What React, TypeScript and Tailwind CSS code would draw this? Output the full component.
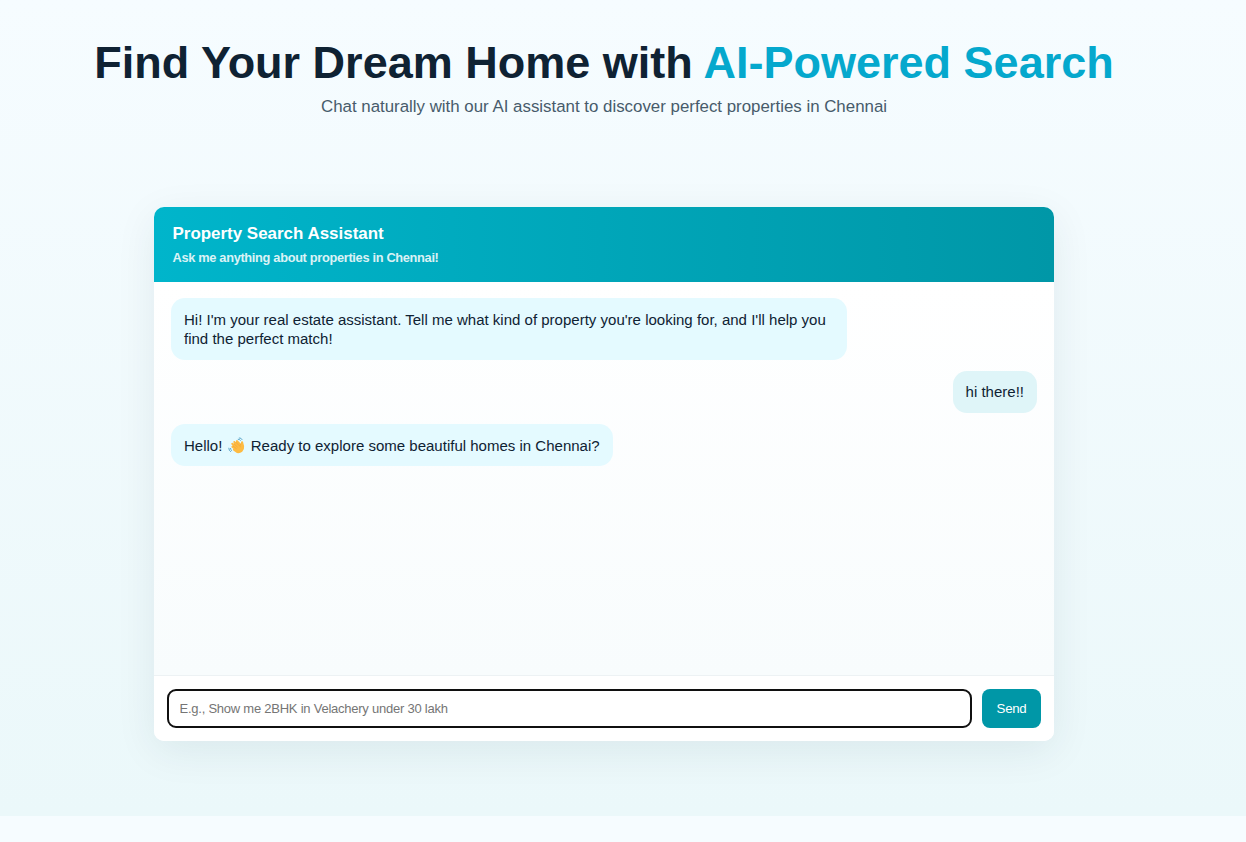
import { useState } from "react";

function WavingHand() {
  return (
    <svg viewBox="0 0 18 18" className="mx-px inline-block h-[18px] w-[18px] align-[-4px]" role="img" aria-label="waving hand">
      <path d="M3.4 6.3Q4.1 5.4 5 6L6.2 7 5.3 5.1Q5.3 3.8 6.7 4.1L8 5.3 8 3.7Q8.8 2.6 9.8 3.5L12.9 6.8 13.1 4.8Q13.7 3.7 14.9 4.6L16.1 9.1Q16.6 12.6 14.2 14.7 11.9 16.6 8.9 16L5.3 13.6Q4.3 12.4 5.4 11.8L3.6 10.4Q2.9 9.2 4.1 8.7L5 9 3.5 7.4Q3 6.8 3.4 6.3Z" fill="#fdbb42" />
      <path d="m6.2 7 3.2 3M8 5.3l3 3.1M5 9l3.2 2.4M12.9 6.8q-1.3 1.4-.8 3.1" fill="none" stroke="#ee9f38" strokeWidth="0.6" strokeLinecap="round" />
      <path d="M10.2 2.2q1.4-.3 2.2 1.2M11.3.9q2-.2 2.8 1.7M2.5 11.4q-.1 1.5 1.2 2.2M.8 11.2q0 2.4 1.8 3.5" fill="none" stroke="#4f9ec4" strokeWidth="0.9" strokeLinecap="round" />
    </svg>
  );
}

export default function App() {
  const [draft, setDraft] = useState("");

  return (
    <div className="h-[842px] overflow-hidden bg-[#f6fcff] font-['Liberation_Sans',Arial,sans-serif] text-[#0f2233]">
      <main className="flex h-[816px] flex-col items-center bg-linear-to-b from-[#f6fcff] to-[#ebf8fa] pr-[38px] pt-[36px]">
        <h1 className="whitespace-nowrap text-[45px] font-bold leading-[54px]">
          Find Your Dream Home with <span className="text-[#05a8cd]">AI-Powered Search</span>
        </h1>
        <p className="mt-[7px] text-[16.86px] leading-[20px] text-[#475b6b]">
          Chat naturally with our AI assistant to discover perfect properties in Chennai
        </p>

        <section className="mt-[90px] flex h-[534px] w-[900px] flex-col overflow-hidden rounded-[10px] bg-white shadow-[0_10px_40px_rgba(10,50,60,0.08)]">
          <header className="h-[75px] bg-linear-to-r from-[#00b5cb] to-[#0097a7] px-[18.5px] pt-[17px] text-white">
            <h2 className="text-[16.95px] font-bold leading-[20px]">Property Search Assistant</h2>
            <p className="mt-[6px] text-[12.8px] font-bold leading-[15px] tracking-[-0.32px] opacity-85">
              Ask me anything about properties in Chennai!
            </p>
          </header>

          <div className="flex h-[393px] flex-col gap-[11px] bg-linear-to-b from-white to-[#f8fcfd] px-[17px] pt-4 text-[15.02px] leading-[19px]">
            <div className="h-[62px] w-[676px] rounded-[14px] bg-[#e4faff] px-[13px] pt-[12px]">
              Hi! I'm your real estate assistant. Tell me what kind of property you're looking for, and I'll help you find the perfect match!
            </div>
            <div className="h-[42px] self-end rounded-[14px] bg-[#dff5f8] px-[13px] pt-[11px]">hi there!!</div>
            <div className="h-[42px] self-start rounded-[14px] bg-[#e4faff] px-[13px] pt-[12px]">
              Hello! <WavingHand /> Ready to explore some beautiful homes in Chennai?
            </div>
          </div>

          <form
            className="flex h-[66px] gap-[10px] border-t border-[#edf2f4] bg-white px-[13px] pb-[13px] pt-[13px]"
            onSubmit={(e) => e.preventDefault()}
          >
            <input
              className="h-[39px] flex-1 rounded-[9px] border-2 border-[#101010] px-[10.5px] text-[13px] tracking-[-0.24px] outline-none placeholder:text-[#757575]"
              placeholder="E.g., Show me 2BHK in Velachery under 30 lakh"
              value={draft}
              onChange={(e) => setDraft(e.target.value)}
            />
            <button className="h-[39px] w-[59px] rounded-[8px] bg-[#0097a7] text-[13.3px] tracking-[-0.3px] text-white">Send</button>
          </form>
        </section>
      </main>
    </div>
  );
}
